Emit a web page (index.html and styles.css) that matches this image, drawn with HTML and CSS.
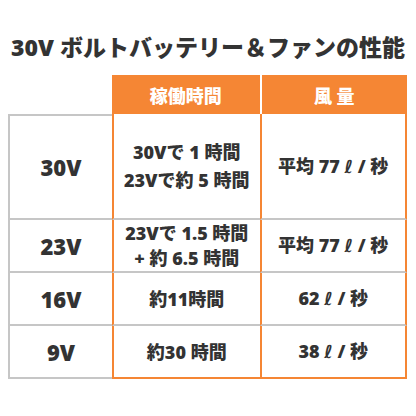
FILE: index.html
```html
<!DOCTYPE html>
<html lang="ja">
    <head>
        <meta charset="UTF-8">
        <meta name="viewport" content="width=device-width, initial-scale=1.0">
        <title>30V ボルトバッテリー＆ファンの性能</title>
        <link rel="stylesheet" href="styles.css">
    </head>
    <body>

        <!-- Title -->
        <h1 class="title">30V ボルトバッテリー＆ファンの性能</h1>

        <!-- Spec table -->
        <table class="spec">
            <thead>
                <tr>
                    <th class="blank"></th>
                    <th class="head">稼働時間</th>
                    <th class="head">風 量</th>
                </tr>
            </thead>
            <tbody>
                <tr class="tall">
                    <td class="volt">30V</td>
                    <td class="val">30Vで 1 時間<br>23Vで約 5 時間</td>
                    <td class="val">平均 77 <span class="l">ℓ</span> / 秒</td>
                </tr>
                <tr>
                    <td class="volt">23V</td>
                    <td class="val two">23Vで 1.5 時間<br>+ 約 6.5 時間</td>
                    <td class="val">平均 77 <span class="l">ℓ</span> / 秒</td>
                </tr>
                <tr>
                    <td class="volt">16V</td>
                    <td class="val">約11時間</td>
                    <td class="val">62 <span class="l">ℓ</span> / 秒</td>
                </tr>
                <tr>
                    <td class="volt">9V</td>
                    <td class="val">約30 時間</td>
                    <td class="val">38 <span class="l">ℓ</span> / 秒</td>
                </tr>
            </tbody>
        </table>

    </body>
</html>
```

FILE: styles.css
```css
/* CSS */
body {
    margin: 0;
    background-color: #ffffff;
    color: #333333;
    font-family: "Open Sans", "Noto Sans CJK JP", sans-serif;
}
.title {
    margin: 32px 0 0;
    font-size: 23px;
    line-height: 30px;
    font-weight: 800;
    text-align: center;
    color: #333333;
}
.spec {
    margin: 13px 0 0 8px;
    width: 399px;
    border-collapse: separate;
    border-spacing: 0;
    table-layout: fixed;
}
.spec th,
.spec td {
    padding: 0;
    text-align: center;
    vertical-align: middle;
    font-weight: 800;
}
.blank {
    width: 104px;
}
.head {
    height: 39px;
    background-color: #f58634;
    color: white;
    font-size: 18px;
}
.head + .head {
    border-left: 2px solid #ffffff;
}
.volt {
    height: 51px;
    font-size: 22px;
    border-left: 2px solid #c6c6c6;
    border-bottom: 2px solid #c6c6c6;
}
.tall .volt {
    height: 102px;
    border-top: 2px solid #c6c6c6;
}
.val {
    font-size: 18px;
    line-height: 28px;
    border-left: 2px solid #f58634;
    border-bottom: 2px solid #c6c6c6;
}
.val:last-child {
    border-right: 2px solid #f58634;
}
.val.two {
    line-height: 25px;
}
tbody tr:last-child .val {
    border-bottom-color: #f58634;
}
.l {
    font-family: "DejaVu Sans", sans-serif;
    font-style: italic;
}
```
